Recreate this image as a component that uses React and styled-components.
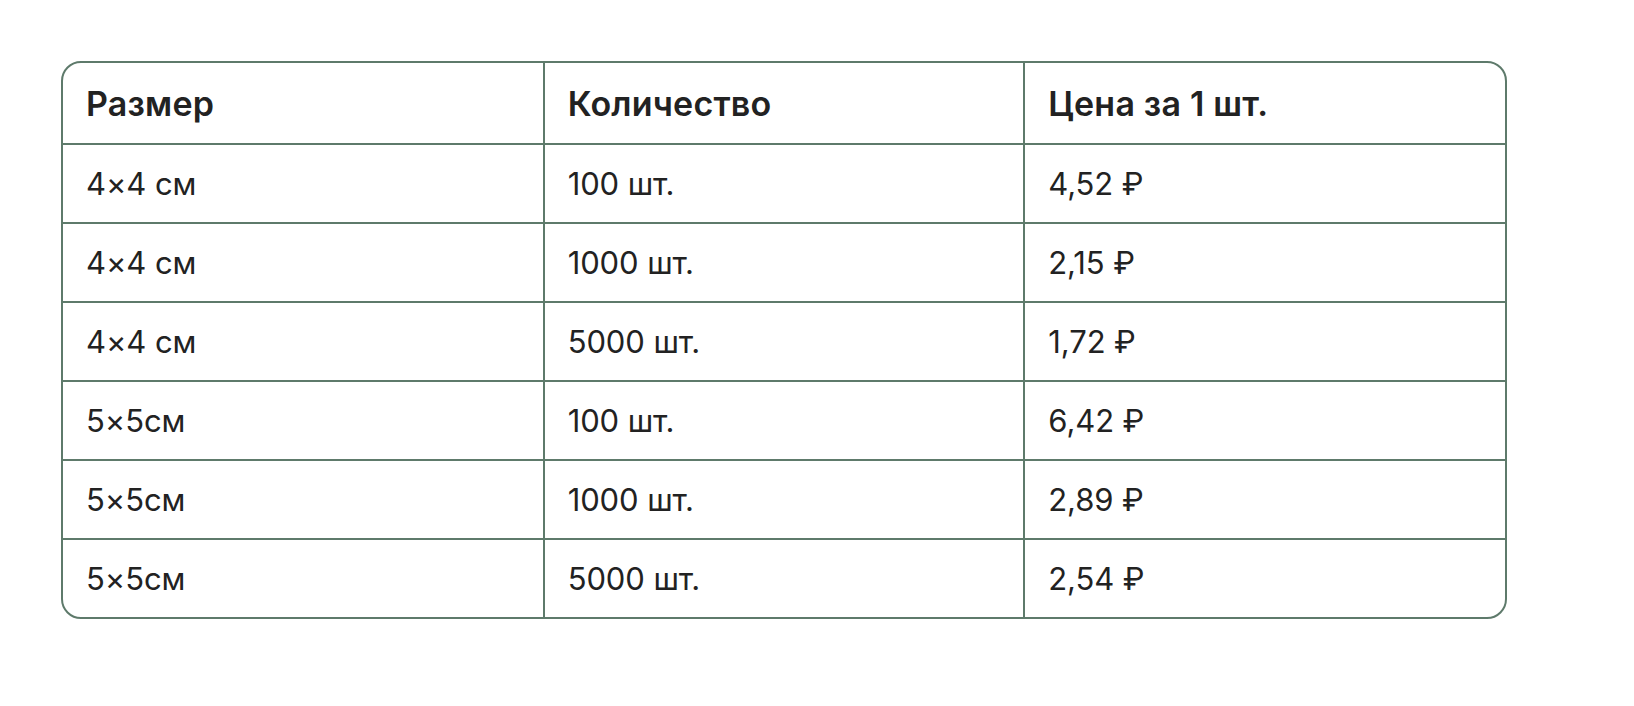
import React from "react";
import styled, { createGlobalStyle } from "styled-components";

const rows = [
  { size: "4×4 см", qty: "100 шт.", price: "4,52 ₽" },
  { size: "4×4 см", qty: "1000 шт.", price: "2,15 ₽" },
  { size: "4×4 см", qty: "5000 шт.", price: "1,72 ₽" },
  { size: "5×5см", qty: "100 шт.", price: "6,42 ₽" },
  { size: "5×5см", qty: "1000 шт.", price: "2,89 ₽" },
  { size: "5×5см", qty: "5000 шт.", price: "2,54 ₽" },
];

const GlobalStyle = createGlobalStyle`
  body {
    margin: 0;
    background: #ffffff;
    font-family: Inter, "Noto Sans", sans-serif;
    color: #222222;
  }
`;

const Page = styled.div`
  padding: 61px 128px 0 61px;
`;

const Frame = styled.div`
  width: 1446px;
  border: 2px solid #5e7a6b;
  border-radius: 20px;
  overflow: hidden;
  box-sizing: border-box;
`;

const Table = styled.table`
  width: 100%;
  border-collapse: collapse;
  table-layout: fixed;
`;

const Cell = styled.td`
  border: 2px solid #5e7a6b;
  padding: 0 0 0 23px;
  height: ${(p) => (p.$head ? 80 : 77)}px;
  font-size: ${(p) => (p.$head ? 34 : 31)}px;
  font-weight: ${(p) => (p.$head ? 600 : 400)};
  letter-spacing: ${(p) => (p.$head ? "0.2px" : "-0.1px")};
  text-align: left;
  vertical-align: middle;
  white-space: nowrap;

  tr:first-child > & {
    border-top: none;
  }
  tr:last-child > & {
    border-bottom: none;
  }
  &:first-child {
    border-left: none;
  }
  &:last-child {
    border-right: none;
  }
`;

export default function App() {
  return (
    <>
      <GlobalStyle />
      <Page>
        <Frame>
          <Table>
            <tbody>
              <tr>
                <Cell as="th" $head>Размер</Cell>
                <Cell as="th" $head>Количество</Cell>
                <Cell as="th" $head>Цена за 1 шт.</Cell>
              </tr>
              {rows.map((r, i) => (
                <tr key={i}>
                  <Cell>{r.size}</Cell>
                  <Cell>{r.qty}</Cell>
                  <Cell>{r.price}</Cell>
                </tr>
              ))}
            </tbody>
          </Table>
        </Frame>
      </Page>
    </>
  );
}
